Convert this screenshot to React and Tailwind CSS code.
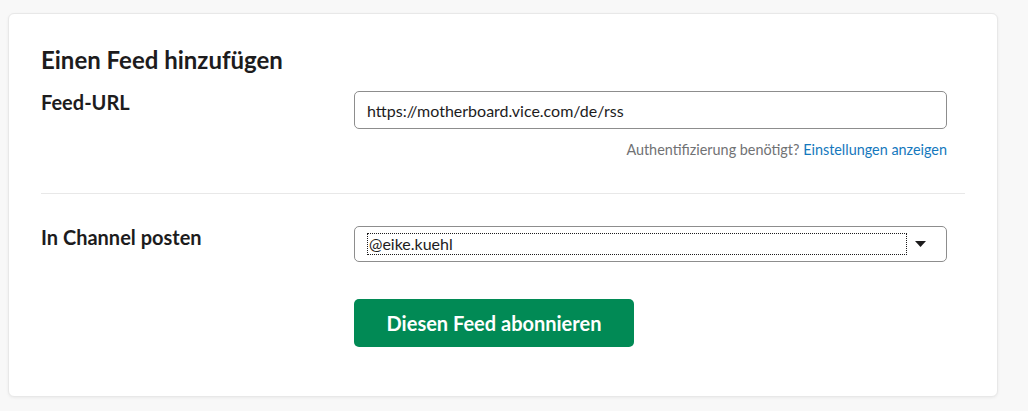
import React from "react";

const Field = ({ label, children, className = "" }) => (
  <div className={`grid grid-cols-[313px_593px] items-start ${className}`}>
    <div className="text-[20px] font-bold leading-[22px] text-[#1d1c1d]">
      {label}
    </div>
    <div>{children}</div>
  </div>
);

export default function App() {
  return (
    <div
      className="min-h-screen bg-[#f8f8f8] pl-2 pt-[13px]"
      style={{ fontFamily: "Lato, 'Noto Sans', sans-serif" }}
    >
      <div className="w-[990px] rounded-md border border-[#e8e8e8] bg-white px-8 pt-8 pb-[49px] shadow-[0_1px_3px_rgba(0,0,0,0.06)]">
        <h2 className="text-[24px] font-bold leading-[28px] text-[#1d1c1d]">
          Einen Feed hinzufügen
        </h2>

        <Field label="Feed-URL" className="mt-[17px]">
          <input
            type="text"
            defaultValue="https://motherboard.vice.com/de/rss"
            className="h-[38px] w-full rounded-[5px] border border-[#8d8d8d] px-3 text-[16px] text-[#1d1c1d] outline-none"
          />
          <p className="mt-[12px] text-right text-[14.4px] leading-[18px] text-[#717274]">
            Authentifizierung benötigt?{" "}
            <a href="#" className="text-[#1578bd]">
              Einstellungen anzeigen
            </a>
          </p>
        </Field>

        <div className="mt-[34px] h-px bg-[#e8e8e8]" />

        <Field label="In Channel posten" className="mt-[32px]">
          <div className="flex h-[36px] w-full items-center rounded-[5px] border border-[#8d8d8d] pl-3 pr-5">
            <div className="flex h-[22px] flex-1 items-center border border-dotted border-[#1d1c1d] pl-[1px] text-[16px] text-[#1d1c1d]">
              @eike.kuehl
            </div>
            <svg width="11" height="6" viewBox="0 0 11 6" className="ml-2">
              <path d="M0 0h11L5.5 6z" fill="#1d1c1d" />
            </svg>
          </div>
        </Field>

        <div className="mt-[37px] pl-[313px]">
          <button className="h-[48px] w-[280px] rounded-[5px] bg-[#018a55] text-[20px] font-bold text-white">
            Diesen Feed abonnieren
          </button>
        </div>
      </div>
    </div>
  );
}
